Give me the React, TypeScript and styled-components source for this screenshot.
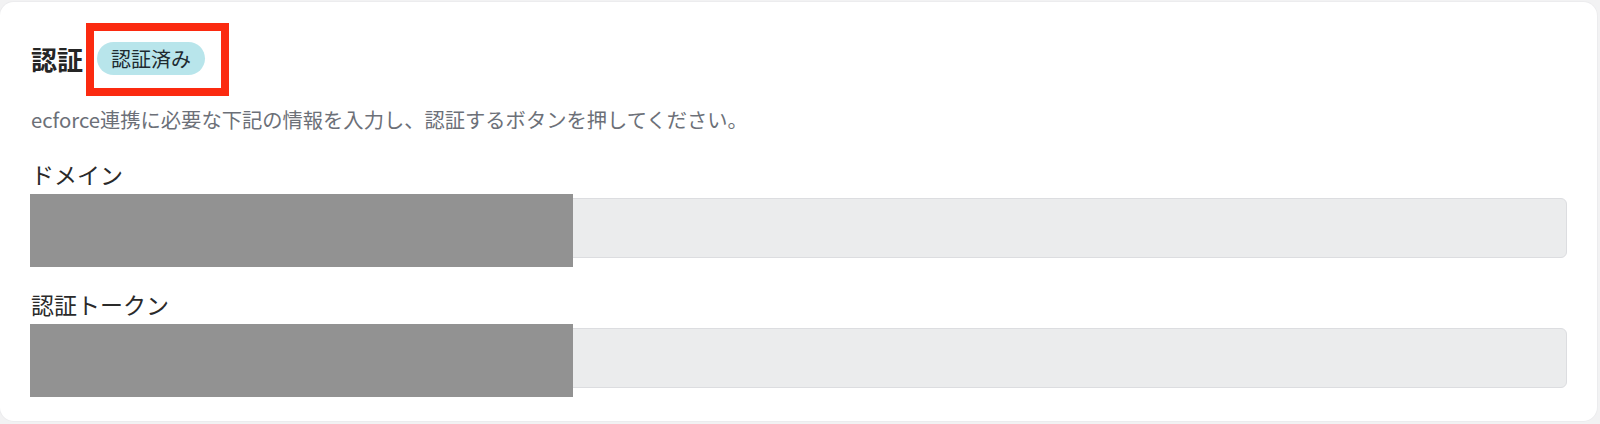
import styled, { createGlobalStyle } from 'styled-components';

const GlobalStyle = createGlobalStyle`
    html, body {
        margin: 0;
        padding: 0;
        background: #f2f2f3;
    }
    body {
        font-family: "Noto Sans CJK JP", "Noto Sans", sans-serif;
        color: #2b2b2b;
    }
`

const fields = [
    { label: 'ドメイン', name: 'domain' },
    { label: '認証トークン', name: 'token' },
]

const App = () => {
    return (
        <>
            <GlobalStyle />
            <Page>
                <Card>
                    <Header>
                        <Title>認証</Title>
                        <BadgeWrap>
                            <Badge>認証済み</Badge>
                            <Highlight />
                        </BadgeWrap>
                    </Header>
                    <Description>ecforce連携に必要な下記の情報を入力し、認証するボタンを押してください。</Description>
                    {fields.map((f, i) => (
                        <Field key={f.name} $first={i === 0}>
                            <Label htmlFor={f.name}>{f.label}</Label>
                            <InputBox>
                                <Input id={f.name} disabled />
                                <Redaction />
                            </InputBox>
                        </Field>
                    ))}
                </Card>
            </Page>
        </>
    )
}

const Page = styled.div`
    padding: 2px 3px 3px 0;
    height: 424px;
    box-sizing: border-box;
`
const Card = styled.section`
    background: #fff;
    border-radius: 14px;
    box-shadow: 0 0 0 1px #ececee;
    padding: 40px 30px 34px 31px;
    height: 419px;
    box-sizing: border-box;
`
const Header = styled.div`
    display: flex;
    align-items: center;
    gap: 14px;
    height: 33px;
`
const Title = styled.h2`
    margin: 0;
    font-size: 26px;
    font-weight: 700;
    line-height: 33px;
    color: #252525;
`
const BadgeWrap = styled.div`
    position: relative;
    display: flex;
`
const Badge = styled.span`
    display: inline-flex;
    align-items: center;
    height: 33px;
    padding: 0 14px;
    border-radius: 17px;
    background: #b8e5eb;
    color: #1e2a30;
    font-size: 20px;
    line-height: 1;
`
const Highlight = styled.div`
    position: absolute;
    left: -11px;
    top: -19px;
    right: -24px;
    bottom: -21px;
    border: 8px solid #fb2a10;
    pointer-events: none;
`
const Description = styled.p`
    margin: 29px 0 0;
    font-size: 20.3px;
    line-height: 30px;
    color: #6c7078;
`
const Field = styled.div<{ $first: boolean }>`
    margin-top: ${p => p.$first ? '24px' : '30px'};
    display: flex;
    flex-direction: column;
`
const Label = styled.label`
    font-size: 23px;
    line-height: 32px;
    color: #2a2a2a;
    margin-bottom: 8px;
`
const InputBox = styled.div`
    position: relative;
`
const Input = styled.input`
    display: block;
    width: 100%;
    height: 60px;
    box-sizing: border-box;
    border: 1px solid #dcdde0;
    border-radius: 6px;
    background: #ebeced;
    padding: 0 16px;
    font: inherit;
`
const Redaction = styled.div`
    position: absolute;
    left: -1px;
    top: -4px;
    width: 543px;
    height: 73px;
    background: #929292;
`

export default App
